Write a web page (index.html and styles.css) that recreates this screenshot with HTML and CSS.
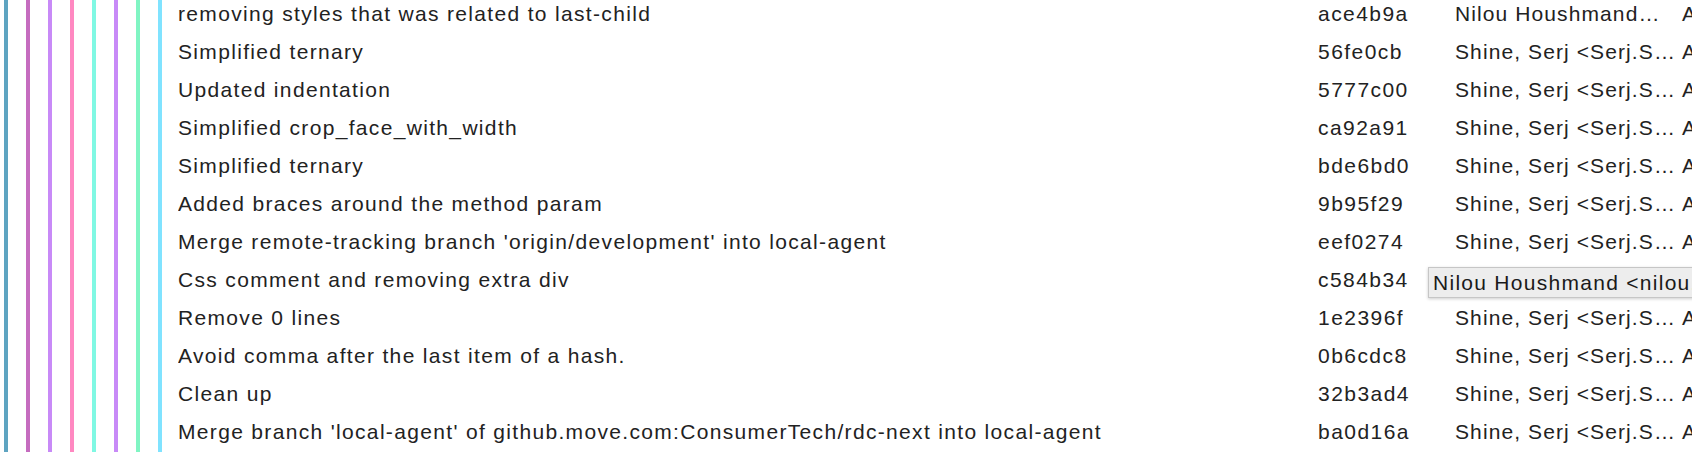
FILE: index.html
```html
<!DOCTYPE html>
<html>
<head>
<meta charset="utf-8">
<link rel="stylesheet" href="styles.css">
</head>
<body>
<div class="history">
  <div class="graph">
    <span class="lane lane-1"></span>
    <span class="lane lane-2"></span>
    <span class="lane lane-3"></span>
    <span class="lane lane-4"></span>
    <span class="lane lane-5"></span>
    <span class="lane lane-6"></span>
    <span class="lane lane-7"></span>
    <span class="lane lane-8"></span>
  </div>
  <div class="rows">
    <div class="row"><span class="msg">removing styles that was related to last-child</span><span class="hash">ace4b9a</span><span class="author">Nilou Houshmand…</span><span class="date">Apr 24, 2018</span></div>
    <div class="row"><span class="msg">Simplified ternary</span><span class="hash">56fe0cb</span><span class="author">Shine, Serj &lt;Serj.S…</span><span class="date">Apr 24, 2018</span></div>
    <div class="row"><span class="msg">Updated indentation</span><span class="hash">5777c00</span><span class="author">Shine, Serj &lt;Serj.S…</span><span class="date">Apr 24, 2018</span></div>
    <div class="row"><span class="msg">Simplified crop_face_with_width</span><span class="hash">ca92a91</span><span class="author">Shine, Serj &lt;Serj.S…</span><span class="date">Apr 24, 2018</span></div>
    <div class="row"><span class="msg">Simplified ternary</span><span class="hash">bde6bd0</span><span class="author">Shine, Serj &lt;Serj.S…</span><span class="date">Apr 24, 2018</span></div>
    <div class="row"><span class="msg">Added braces around the method param</span><span class="hash">9b95f29</span><span class="author">Shine, Serj &lt;Serj.S…</span><span class="date">Apr 24, 2018</span></div>
    <div class="row"><span class="msg">Merge remote-tracking branch 'origin/development' into local-agent</span><span class="hash">eef0274</span><span class="author">Shine, Serj &lt;Serj.S…</span><span class="date">Apr 24, 2018</span></div>
    <div class="row has-tip"><span class="msg">Css comment and removing extra div</span><span class="hash">c584b34</span><span class="author">Nilou Houshmand…</span><span class="date">Apr 24, 2018</span><span class="tooltip">Nilou Houshmand &lt;nilou.houshmand@move.com&gt;</span></div>
    <div class="row"><span class="msg">Remove 0 lines</span><span class="hash">1e2396f</span><span class="author">Shine, Serj &lt;Serj.S…</span><span class="date">Apr 24, 2018</span></div>
    <div class="row"><span class="msg">Avoid comma after the last item of a hash.</span><span class="hash">0b6cdc8</span><span class="author">Shine, Serj &lt;Serj.S…</span><span class="date">Apr 24, 2018</span></div>
    <div class="row"><span class="msg">Clean up</span><span class="hash">32b3ad4</span><span class="author">Shine, Serj &lt;Serj.S…</span><span class="date">Apr 24, 2018</span></div>
    <div class="row"><span class="msg">Merge branch 'local-agent' of github.move.com:ConsumerTech/rdc-next into local-agent</span><span class="hash">ba0d16a</span><span class="author">Shine, Serj &lt;Serj.S…</span><span class="date">Apr 24, 2018</span></div>
  </div>
</div>
</body>
</html>
```
FILE: styles.css
```css
html, body {
  margin: 0;
  padding: 0;
  background: #ffffff;
  overflow: hidden;
}
body {
  width: 1692px;
  height: 452px;
  font-family: "Liberation Sans", Arial, sans-serif;
  font-size: 21px;
  letter-spacing: 1.33px;
  color: #222222;
}
.history {
  display: flex;
  height: 452px;
}
.graph {
  display: flex;
  gap: 18px;
  padding-left: 4px;
  width: 174px;
  flex: none;
  box-sizing: border-box;
}
.lane {
  width: 4px;
  height: 100%;
  flex: none;
}
.lane-1 { background: #5ea4c1; }
.lane-2 { background: #c56cbf; }
.lane-3 { background: #c88af7; }
.lane-4 { background: #ff88c1; }
.lane-5 { background: #80f8e3; }
.lane-6 { background: #c88af7; }
.lane-7 { background: #80f5c3; }
.lane-8 { background: #80e3ff; }
.rows {
  flex: 1;
  margin-top: -5px;
  min-width: 0;
}
.row {
  position: relative;
  display: flex;
  align-items: center;
  height: 38px;
  padding-left: 4px;
  white-space: nowrap;
}
.msg {
  width: 1140px;
  flex: none;
  overflow: hidden;
}
.hash {
  width: 137px;
  flex: none;
  letter-spacing: 1.45px;
}
.author {
  width: 227px;
  flex: none;
  overflow: hidden;
  letter-spacing: 1.1px;
}
.date {
  flex: none;
}
.tooltip {
  position: absolute;
  left: 1254px;
  top: 6px;
  height: 31px;
  box-sizing: border-box;
  padding: 0 6px 0 4px;
  line-height: 29px;
  letter-spacing: 1.28px;
  background: #ededed;
  border: 1px solid #c6c6c6;
  box-shadow: 0 1px 3px rgba(0, 0, 0, 0.2);
  color: #1a1a1a;
  white-space: nowrap;
}
```
